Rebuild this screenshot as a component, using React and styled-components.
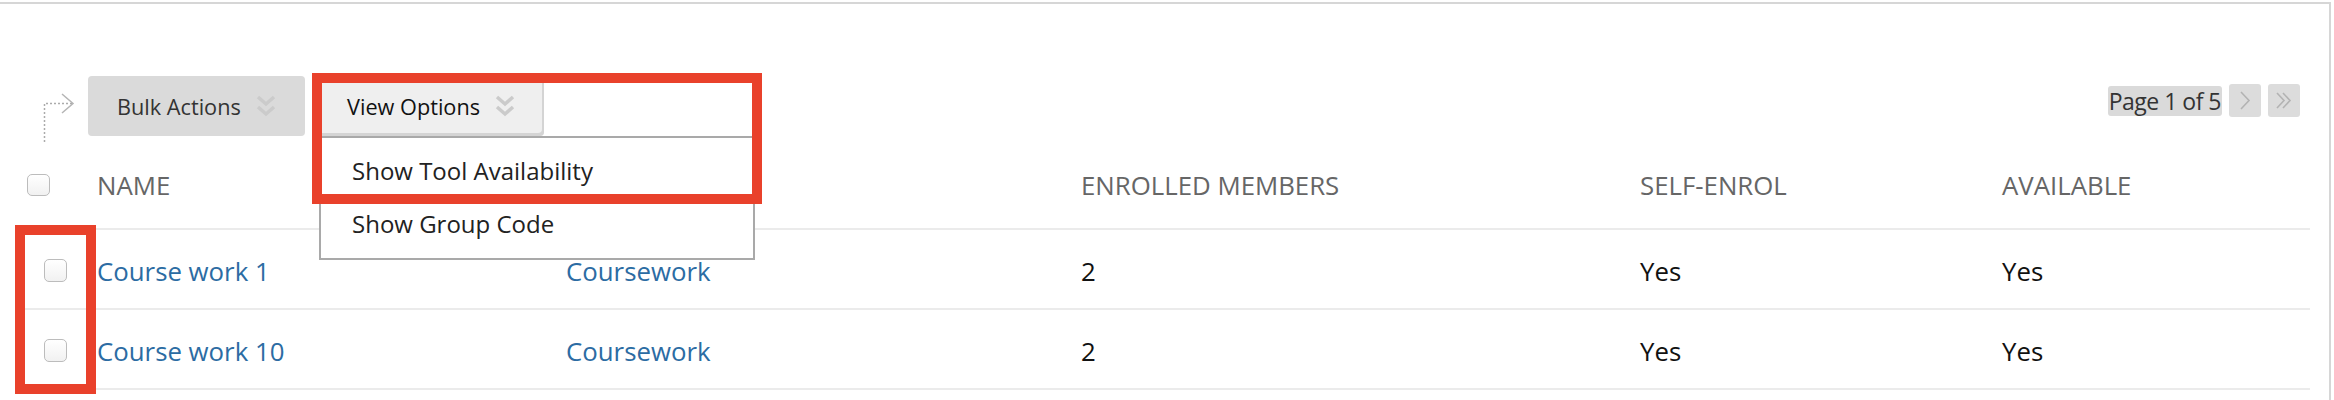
import React from "react"
import styled, { createGlobalStyle } from "styled-components"

const GlobalStyle = createGlobalStyle`
  body {
    margin: 0;
    background: #fff;
    font-family: "Open Sans", "Liberation Sans", sans-serif;
  }
`

const Frame = styled.div`
  position: relative;
  box-sizing: border-box;
  width: 2331px;
  height: 398px;
  margin-top: 2px;
  border-top: 2px solid #d6d6d6;
  border-right: 2px solid #d6d6d6;
  overflow: hidden;
`

const Toolbar = styled.div`
  display: flex;
  align-items: flex-start;
  padding: 72px 29px 0 40px;
  height: 60px;
`

const ActionArrow = styled.svg`
  width: 36px;
  height: 52px;
  margin-top: 16px;
  flex: none;
`

const MenuButton = styled.div`
  display: flex;
  align-items: center;
  gap: 15px;
  box-sizing: border-box;
  height: 60px;
  padding: 0 29px 0 ${p => p.$padLeft}px;
  width: ${p => p.$width}px;
  border-radius: 4px;
  background: ${p => (p.$open ? "#efefef" : "#dadada")};
  box-shadow: ${p => (p.$open ? "inset -2px -3px 0 #d4d4d4" : "none")};
  color: ${p => (p.$open ? "#111" : "#333")};
  font-size: 21.7px;
  white-space: nowrap;
`

const Chevrons = styled.svg`
  width: 20px;
  height: 23px;
  flex: none;
`

const Dropdown = styled.div`
  position: relative;
  margin-left: 14px;
  z-index: 3;
`

const Menu = styled.ul`
  position: absolute;
  top: 60px;
  left: 0;
  box-sizing: border-box;
  width: 436px;
  margin: 0;
  padding: 6px 0 8px;
  list-style: none;
  background: #fff;
  border: 2px solid #a9a9a9;
`

const MenuItem = styled.li`
  padding-left: 31px;
  line-height: 53px;
  font-size: 24px;
  color: #222;
  white-space: nowrap;
`

const Pager = styled.div`
  display: flex;
  align-items: center;
  gap: 7px;
  margin-left: auto;
  margin-top: 8px;
  height: 33px;
`

const PageLabel = styled.span`
  display: flex;
  align-items: center;
  height: 30px;
  padding: 0 1px;
  border-radius: 3px;
  background: #dadada;
  color: #333;
  font-size: 23px;
  letter-spacing: -0.5px;
`

const PageButton = styled.span`
  display: flex;
  align-items: center;
  justify-content: center;
  width: 32px;
  height: 33px;
  border-radius: 3px;
  background: #dcdcdc;
`

const Table = styled.div`
  margin: 0 19px 0 15px;
`

const Row = styled.div`
  display: grid;
  grid-template-columns: 82px 469px 515px 559px 362px 1fr;
  align-items: center;
  box-sizing: border-box;
  height: ${p => (p.$head ? 94 : 80)}px;
  padding-top: ${p => (p.$head ? 18 : 3)}px;
  padding-bottom: ${p => (p.$head ? 12 : 0)}px;
  border-bottom: 2px solid #ebebeb;
`

const Cell = styled.div`
  font-size: 25.8px;
  white-space: nowrap;
  color: ${p => (p.$head ? "#666" : p.$link ? "#2c6ca3" : "#111")};
`

const Check = styled.span`
  display: block;
  box-sizing: border-box;
  width: 23px;
  height: ${p => (p.$head ? 22 : 23)}px;
  margin-left: ${p => p.$inset}px;
  border: 1px solid #bcbcbc;
  border-radius: 5px;
  background: linear-gradient(#ffffff, #f1f1f1);
`

const Callout = styled.div`
  position: absolute;
  left: ${p => p.$x}px;
  top: ${p => p.$y}px;
  width: ${p => p.$w}px;
  height: ${p => p.$h}px;
  box-sizing: border-box;
  border: 10px solid #e9412b;
  z-index: 5;
`

const DoubleDown = () => (
  <Chevrons viewBox="0 0 20 23">
    <polyline points="2,2 10,9 18,2" fill="none" stroke="#cbcbcb" strokeWidth="3.5" />
    <polyline points="2,12 10,19 18,12" fill="none" stroke="#cbcbcb" strokeWidth="3.5" />
  </Chevrons>
)

const groups = [
  { name: "Course work 1", set: "Coursework", members: 2, self: "Yes", available: "Yes" },
  { name: "Course work 10", set: "Coursework", members: 2, self: "Yes", available: "Yes" },
]

export default function App() {
  return (
    <>
      <GlobalStyle />
      <Frame>
        <Toolbar>
          <ActionArrow viewBox="0 0 36 52">
            <path d="M4.5 50 V11.5 H32" fill="none" stroke="#ababab" strokeWidth="1.5" strokeDasharray="2 2" />
            <polyline points="22,2 33,11.5 22,21" fill="none" stroke="#b5b5b5" strokeWidth="1.5" />
          </ActionArrow>
          <MenuButton style={{ marginLeft: 12 }} $padLeft={29} $width={217}>
            Bulk Actions
            <DoubleDown />
          </MenuButton>
          <Dropdown>
            <MenuButton $open $padLeft={28} $width={225}>
              View Options
              <DoubleDown />
            </MenuButton>
            <Menu>
              <MenuItem>Show Tool Availability</MenuItem>
              <MenuItem>Show Group Code</MenuItem>
            </Menu>
          </Dropdown>
          <Pager>
            <PageLabel>Page 1 of 5</PageLabel>
            <PageButton>
              <svg width="32" height="33" viewBox="0 0 32 33">
                <polyline points="12,8 20,16.5 12,25" fill="none" stroke="#b3b3b3" strokeWidth="1.6" />
              </svg>
            </PageButton>
            <PageButton>
              <svg width="32" height="33" viewBox="0 0 32 33">
                <polyline points="9,9 16,16.5 9,24" fill="none" stroke="#b3b3b3" strokeWidth="1.6" />
                <polyline points="15,9 22,16.5 15,24" fill="none" stroke="#b3b3b3" strokeWidth="1.6" />
              </svg>
            </PageButton>
          </Pager>
        </Toolbar>

        <Table>
          <Row $head>
            <Check $head $inset={12} />
            <Cell $head>NAME</Cell>
            <Cell $head />
            <Cell $head>ENROLLED MEMBERS</Cell>
            <Cell $head>SELF-ENROL</Cell>
            <Cell $head>AVAILABLE</Cell>
          </Row>
          {groups.map(g => (
            <Row key={g.name}>
              <Check $inset={29} />
              <Cell $link>{g.name}</Cell>
              <Cell $link>{g.set}</Cell>
              <Cell>{g.members}</Cell>
              <Cell>{g.self}</Cell>
              <Cell>{g.available}</Cell>
            </Row>
          ))}
        </Table>

        <Callout $x={312} $y={69} $w={450} $h={131} />
        <Callout $x={15} $y={221} $w={81} $h={169} />
      </Frame>
    </>
  )
}
